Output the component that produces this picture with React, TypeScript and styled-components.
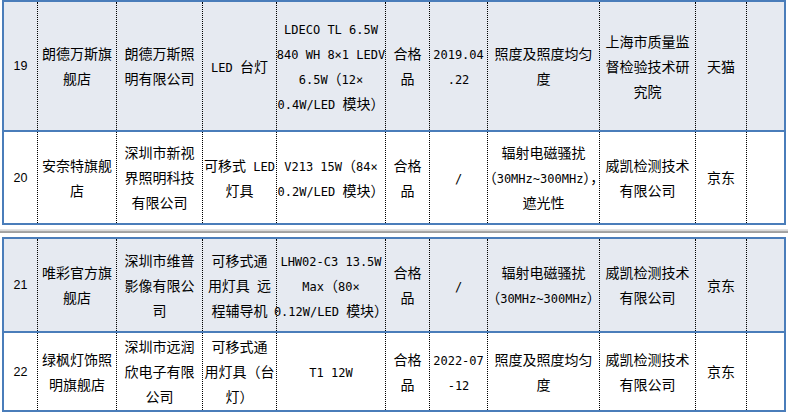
import React from "react";
import styled, { createGlobalStyle } from "styled-components";

const Global = createGlobalStyle`
  html, body {
    margin: 0;
    padding: 0;
    background: #ffffff;
  }
  body {
    font-family: "Noto Sans CJK SC", "Noto Sans", sans-serif;
    color: #000;
  }
`;

const BLUE = "#4a7dba";
const COLS = "33px 79px 86px 74px 109px 44px 58px 112px 96px 51px 38px";

const Page = styled.div`
  width: 788px;
  height: 415px;
  overflow: hidden;
  display: flex;
  flex-direction: column;
`;

const Table = styled.div`
  width: 784px;
  margin-left: 2px;
  box-sizing: border-box;
  border: 2px solid ${BLUE};
`;

const Row = styled.div<{ $h: number; $shade?: boolean; $first?: boolean }>`
  display: grid;
  grid-template-columns: ${COLS};
  height: ${(p) => p.$h}px;
  background: ${(p) => (p.$shade ? "#e6eaf1" : "#ffffff")};
  border-top: ${(p) => (p.$first ? "none" : `2px solid ${BLUE}`)};
`;

const Cell = styled.div`
  box-sizing: border-box;
  border-left: 1px dotted #000;
  display: flex;
  flex-direction: column;
  justify-content: center;
  align-items: center;
  text-align: center;
  font-size: 14px;
  min-width: 0;

  &:first-child {
    border-left: none;
  }
`;

const NoCell = styled(Cell)`
  font-family: "Liberation Sans", Arial, sans-serif;
  font-size: 12.5px;
`;

const Line = styled.div`
  line-height: 25px;
  height: 25px;
  white-space: pre;
`;

const Lat = styled.span`
  font-family: "DejaVu Sans Mono", "Liberation Mono", monospace;
  font-size: 12px;
`;

const Spacer = styled.div`
  height: 4px;
`;

const PageBreak = styled.div`
  height: 4px;
  background: linear-gradient(#e8e8e8 0%, #d4d4d4 45%, #a8a8a8 55%, #9d9d9d 100%);
`;

type RowData = { no: string; h: number; shade?: boolean; cells: string[][] };

// latin runs get the narrow mono face, the rest stays in the CJK face
const renderLine = (text: string) =>
  text.split(/([\x20-\x7E×]+)/).map((part, i) =>
    part === "" ? null : /^[\x20-\x7E×]+$/.test(part) ? (
      <Lat key={i}>{part}</Lat>
    ) : (
      <span key={i}>{part}</span>
    )
  );

const first: RowData[] = [
  {
    no: "19",
    h: 128,
    shade: true,
    cells: [
      ["朗德万斯旗", "舰店"],
      ["朗德万斯照", "明有限公司"],
      ["LED 台灯"],
      ["LDECO TL 6.5W", "840 WH 8×1 LEDV", "6.5W（12×", "0.4W/LED 模块）"],
      ["合格", "品"],
      ["2019.04", ".22"],
      ["照度及照度均匀", "度"],
      ["上海市质量监", "督检验技术研", "究院"],
      ["天猫"],
      [],
    ],
  },
  {
    no: "20",
    h: 91,
    cells: [
      ["安奈特旗舰", "店"],
      ["深圳市新视", "界照明科技", "有限公司"],
      ["可移式 LED", "灯具"],
      ["V213 15W（84×", "0.2W/LED 模块）"],
      ["合格", "品"],
      ["/"],
      ["辐射电磁骚扰", "（30MHz~300MHz），", "遮光性"],
      ["威凯检测技术", "有限公司"],
      ["京东"],
      [],
    ],
  },
];

const second: RowData[] = [
  {
    no: "21",
    h: 92,
    shade: true,
    cells: [
      ["唯彩官方旗", "舰店"],
      ["深圳市维普", "影像有限公", "司"],
      ["可移式通", "用灯具 远", "程辅导机"],
      ["LHW02-C3 13.5W", "Max（80×", "0.12W/LED 模块）"],
      ["合格", "品"],
      ["/"],
      ["辐射电磁骚扰", "（30MHz~300MHz）"],
      ["威凯检测技术", "有限公司"],
      ["京东"],
      [],
    ],
  },
  {
    no: "22",
    h: 77,
    cells: [
      ["绿枫灯饰照", "明旗舰店"],
      ["深圳市远润", "欣电子有限", "公司"],
      ["可移式通", "用灯具（台", "灯）"],
      ["T1 12W"],
      ["合格", "品"],
      ["2022-07", "-12"],
      ["照度及照度均匀", "度"],
      ["威凯检测技术", "有限公司"],
      ["京东"],
      [],
    ],
  },
];

const ResultTable = ({ rows }: { rows: RowData[] }) => (
  <Table>
    {rows.map((r, ri) => (
      <Row key={r.no} $h={r.h} $shade={r.shade} $first={ri === 0}>
        <NoCell>{r.no}</NoCell>
        {r.cells.map((lines, ci) => (
          <Cell key={ci}>
            {lines.map((l, li) => (
              <Line key={li}>{renderLine(l)}</Line>
            ))}
          </Cell>
        ))}
      </Row>
    ))}
  </Table>
);

export default function App() {
  return (
    <>
      <Global />
      <Page>
        <ResultTable rows={first} />
        <Spacer />
        <PageBreak />
        <Spacer />
        <ResultTable rows={second} />
      </Page>
    </>
  );
}
